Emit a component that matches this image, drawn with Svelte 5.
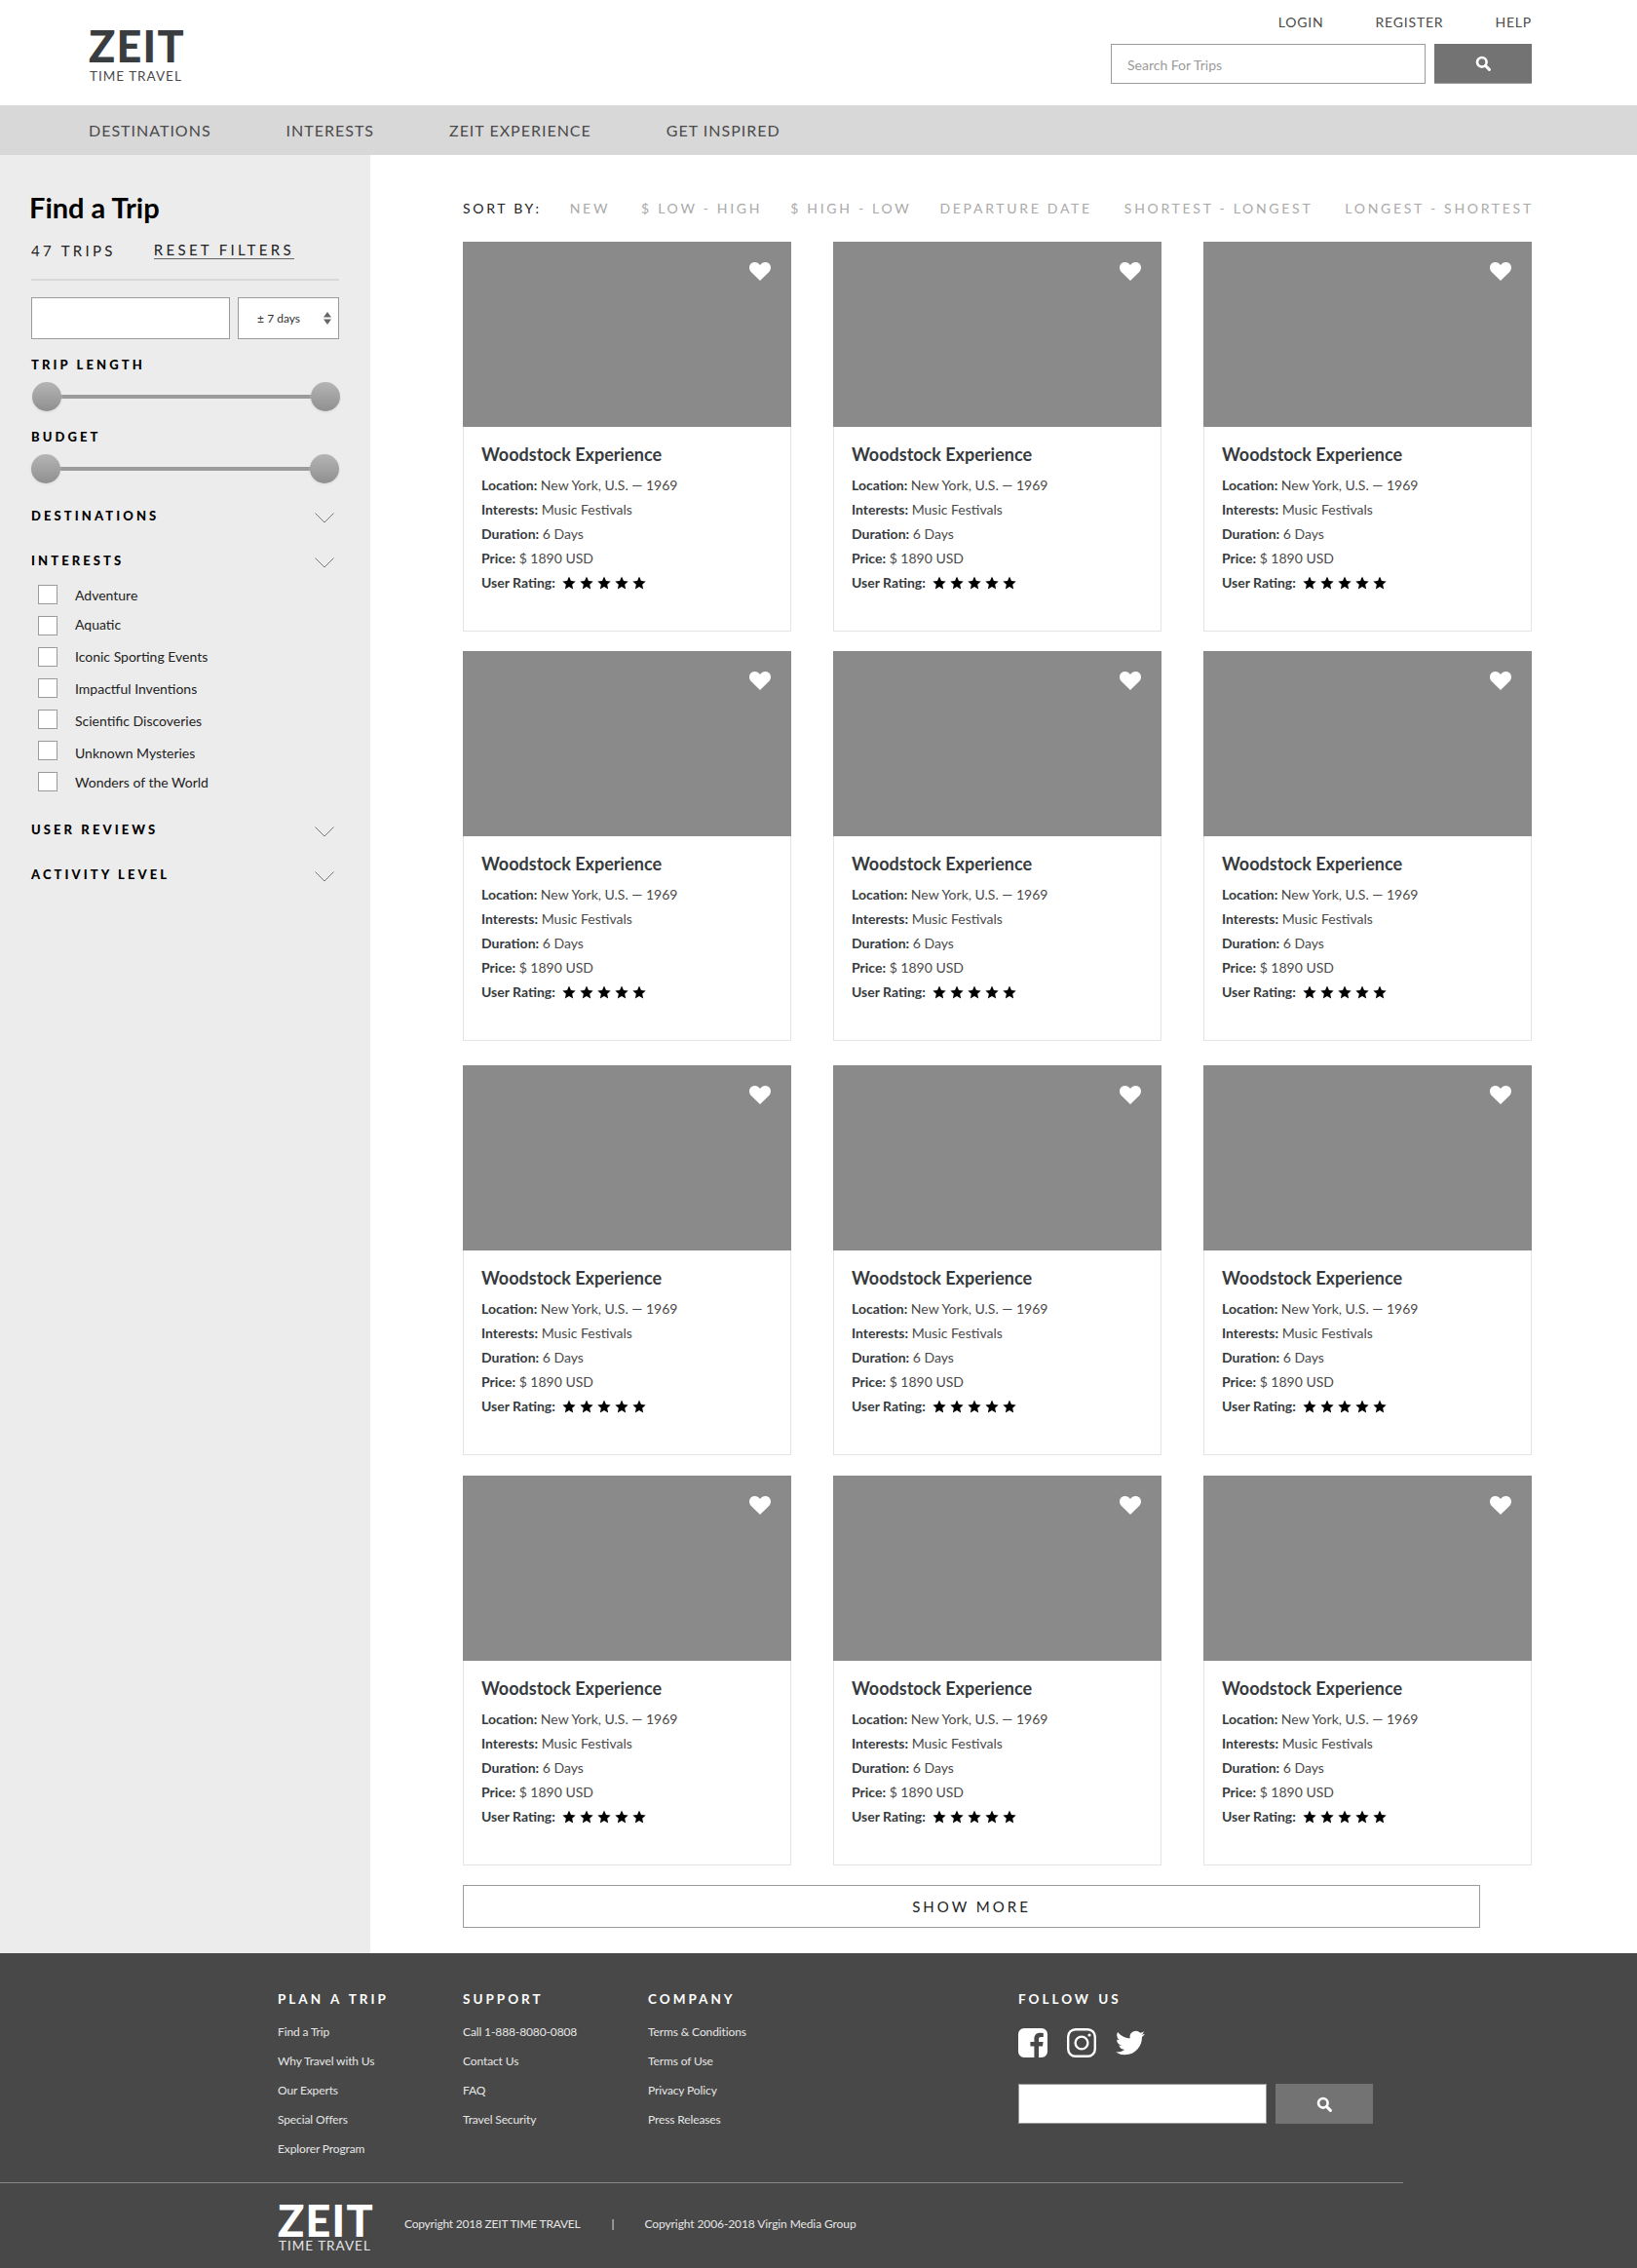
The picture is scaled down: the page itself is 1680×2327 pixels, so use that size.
<script>
  const cardRows = [
    { top: 0 },
    { top: 20 },
    { top: 25 },
    { top: 21 }
  ];
  const cols = [0, 1, 2];
  const navItems = ['DESTINATIONS', 'INTERESTS', 'ZEIT EXPERIENCE', 'GET INSPIRED'];
  const sorts = ['NEW', '$ LOW - HIGH', '$ HIGH - LOW', 'DEPARTURE DATE', 'SHORTEST - LONGEST', 'LONGEST - SHORTEST'];
  const interests = ['Adventure', 'Aquatic', 'Iconic Sporting Events', 'Impactful Inventions', 'Scientific Discoveries', 'Unknown Mysteries', 'Wonders of the World'];
  const footerCols = [
    { h: 'PLAN A TRIP', items: ['Find a Trip', 'Why Travel with Us', 'Our Experts', 'Special Offers', 'Explorer Program'] },
    { h: 'SUPPORT', items: ['Call 1-888-8080-0808', 'Contact Us', 'FAQ', 'Travel Security'] },
    { h: 'COMPANY', items: ['Terms & Conditions', 'Terms of Use', 'Privacy Policy', 'Press Releases'] }
  ];
  const stars = [0, 1, 2, 3, 4];
</script>

{#snippet searchIcon()}
  <svg class="search-ico" viewBox="0 0 16 16" aria-hidden="true"><circle cx="6.8" cy="6.8" r="4.8" fill="none" stroke="#fff" stroke-width="2.6"/><path d="M10.4 10.4 L14.4 14.4" stroke="#fff" stroke-width="3" stroke-linecap="round"/></svg>
{/snippet}

{#snippet chevron()}
  <svg class="chev" viewBox="0 0 20 11" aria-hidden="true"><path d="M0.5 0.5 L10 10 L19.5 0.5" fill="none" stroke="#777" stroke-width="1"/></svg>
{/snippet}

{#snippet slider()}
  <div class="slider"><span class="track"></span><span class="knob"></span><span class="knob"></span></div>
{/snippet}

<div class="page">
  <header class="top">
    <div class="logo">
      <div class="zeit">ZEIT</div>
      <div class="tt">TIME TRAVEL</div>
    </div>
    <div class="top-right">
      <nav class="util"><a href="#a">LOGIN</a><a href="#a">REGISTER</a><a href="#a">HELP</a></nav>
      <div class="search">
        <div class="search-input">Search For Trips</div>
        <button class="search-btn">{@render searchIcon()}</button>
      </div>
    </div>
  </header>

  <nav class="mainnav">
    {#each navItems as n}<a href="#a">{n}</a>{/each}
  </nav>

  <div class="body">
    <aside class="side">
      <h1>Find a Trip</h1>
      <div class="counts"><span>47 TRIPS</span><a href="#a">RESET FILTERS</a></div>
      <div class="rule"></div>
      <div class="dates">
        <div class="date-in"></div>
        <div class="sel">
          <span>± 7 days</span>
          <svg viewBox="0 0 8 13" aria-hidden="true"><path d="M4 0 L8 5.5 H0Z M0 7.5 H8 L4 13Z" fill="#666"/></svg>
        </div>
      </div>
      <h3 class="f-h len">TRIP LENGTH</h3>
      {@render slider()}
      <h3 class="f-h bud">BUDGET</h3>
      <div class="shift">{@render slider()}</div>
      <div class="acc first"><h3 class="f-h">DESTINATIONS</h3>{@render chevron()}</div>
      <div class="acc"><h3 class="f-h">INTERESTS</h3>{@render chevron()}</div>
      <ul class="checks">
        {#each interests as i}
          <li><span class="box"></span><span class="lbl">{i}</span></li>
        {/each}
      </ul>
      <div class="acc rev"><h3 class="f-h">USER REVIEWS</h3>{@render chevron()}</div>
      <div class="acc"><h3 class="f-h">ACTIVITY LEVEL</h3>{@render chevron()}</div>
    </aside>

    <main class="main">
      <div class="sort">
        <span class="sort-l">SORT BY:</span>
        {#each sorts as s}<a href="#a">{s}</a>{/each}
      </div>
      {#each cardRows as r}
        <div class="row" style="margin-top: {r.top}px">
          {#each cols as c}
            <article class="card">
              <div class="img">
                <svg class="heart" viewBox="0 0 22 19" aria-hidden="true"><path d="M11 19 L2 10.2 C-0.7 7.4 -0.6 3.2 2 1.2 C4.8 -0.8 8.8 -0.2 11 3 C13.2 -0.2 17.2 -0.8 20 1.2 C22.6 3.2 22.7 7.4 20 10.2 Z" fill="#fff"/></svg>
              </div>
              <div class="info">
                <h2>Woodstock Experience</h2>
                <p><b>Location:</b> New York, U.S. — 1969</p>
                <p><b>Interests:</b> Music Festivals</p>
                <p><b>Duration:</b> 6 Days</p>
                <p><b>Price:</b> $ 1890 USD</p>
                <p class="rate"><b>User Rating:</b>
                  <span class="stars">
                    {#each stars as s}
                      <svg viewBox="0 0 24 24" aria-hidden="true"><path d="M12 1 L15.4 8.6 L23.4 9.4 L17.4 14.9 L19.1 23 L12 18.8 L4.9 23 L6.6 14.9 L0.6 9.4 L8.6 8.6 Z" fill="#000"/></svg>
                    {/each}
                  </span>
                </p>
              </div>
            </article>
          {/each}
        </div>
      {/each}
      <button class="more">SHOW MORE</button>
    </main>
  </div>

  <footer class="foot">
    <div class="foot-top">
      {#each footerCols as f}
        <div class="fcol">
          <h4>{f.h}</h4>
          {#each f.items as it}<a href="#a">{it}</a>{/each}
        </div>
      {/each}
      <div class="follow">
        <h4>FOLLOW US</h4>
        <div class="social">
          <svg viewBox="0 0 30 30" aria-hidden="true"><path fill="#fff" fill-rule="evenodd" d="M6 0 H24 A6 6 0 0 1 30 6 V24 A6 6 0 0 1 24 30 H21 V18.5 H25 L25.6 14 H21 V11.2 C21 9.8 21.5 8.9 23.3 8.9 H25.8 V4.9 C25.2 4.8 23.9 4.7 22.2 4.7 C18.8 4.7 16.4 6.8 16.4 10.7 V14 H12.4 V18.5 H16.4 V30 H6 A6 6 0 0 1 0 24 V6 A6 6 0 0 1 6 0 Z"/></svg>
          <svg viewBox="0 0 30 30" aria-hidden="true"><rect x="1.2" y="1.2" width="27.6" height="27.6" rx="7.5" fill="none" stroke="#fff" stroke-width="2.4"/><circle cx="15" cy="15" r="6.4" fill="none" stroke="#fff" stroke-width="2.4"/><circle cx="23" cy="7" r="1.6" fill="#fff"/></svg>
          <svg viewBox="0 0 24 24" aria-hidden="true"><path fill="#fff" d="M23.95 4.57a10 10 0 0 1-2.82.77 4.96 4.96 0 0 0 2.16-2.72c-.95.55-2 .95-3.12 1.18a4.92 4.92 0 0 0-8.38 4.48C7.69 8.1 4.07 6.13 1.64 3.16a4.82 4.82 0 0 0-.67 2.48c0 1.71.87 3.21 2.19 4.1a4.9 4.9 0 0 1-2.23-.62v.06a4.92 4.92 0 0 0 3.95 4.83c-.72.2-1.48.22-2.22.08a4.93 4.93 0 0 0 4.6 3.42A9.87 9.87 0 0 1 0 19.54a13.94 13.94 0 0 0 7.55 2.21c9.05 0 14-7.5 14-13.99 0-.21 0-.42-.02-.63a9.94 9.94 0 0 0 2.46-2.55z"/></svg>
        </div>
        <div class="f-search">
          <div class="f-in"></div>
          <button class="f-btn">{@render searchIcon()}</button>
        </div>
      </div>
    </div>
    <div class="foot-rule"></div>
    <div class="foot-bot">
      <div class="logo f-logo">
        <div class="zeit">ZEIT</div>
        <div class="tt">TIME TRAVEL</div>
      </div>
      <span class="c1">Copyright 2018 ZEIT TIME TRAVEL</span>
      <span class="bar">|</span>
      <span class="c2">Copyright 2006-2018 Virgin Media Group</span>
    </div>
  </footer>
</div>

<style>
  :global(body) { margin: 0; background: #fff; }
  .page { width: 1680px; height: 2327px; overflow: hidden; font-family: Lato, "Open Sans", sans-serif; color: #4a4a4a; }
  a { color: inherit; text-decoration: none; }
  h1, h2, h3, h4, p, ul { margin: 0; padding: 0; }
  button { border: 0; padding: 0; cursor: pointer; font-family: inherit; }

  .top { height: 108px; padding: 0 108px 0 91px; display: flex; justify-content: space-between; }
  .logo { padding-top: 25px; }
  .zeit { font-size: 45px; line-height: 44px; font-weight: 900; color: #3a3d40; letter-spacing: 1.2px; }
  .tt { font-size: 13.5px; line-height: 18px; color: #4a4a4a; letter-spacing: 1px; margin-left: 1px; }
  .top-right { width: 432px; }
  .util { display: flex; justify-content: flex-end; gap: 53px; padding-top: 14px; height: 45px; box-sizing: border-box; font-size: 14px; line-height: 17px; letter-spacing: 0.8px; color: #4a4a4a; }
  .search { display: flex; gap: 9px; }
  .search-input { width: 323px; height: 41px; box-sizing: border-box; border: 1px solid #9b9b9b; font-size: 14px; line-height: 41px; padding-left: 16px; color: #9b9b9b; }
  .search-btn { width: 100px; height: 41px; background: #737373; border-bottom: 1px solid #9b9b9b; box-sizing: border-box; display: flex; align-items: center; justify-content: center; }
  .search-ico { width: 16px; height: 16px; display: block; }

  .mainnav { height: 51px; background: #d8d8d8; display: flex; align-items: center; padding-left: 91px; gap: 77px; font-size: 16px; letter-spacing: 1px; color: #4a4a4a; }

  .body { display: flex; height: 1845px; }
  .side { width: 380px; flex: none; background: #ececec; box-sizing: border-box; padding: 38px 32px 0; color: #000; }
  h1 { font-size: 29px; line-height: 32px; font-weight: 700; margin-left: -2px; color: #000; }
  .counts { display: flex; gap: 39px; margin-top: 19px; font-size: 15px; line-height: 18px; letter-spacing: 3.3px; color: #222; }
  .counts a { border-bottom: 1px solid #666; line-height: 17px; height: 17px; }
  .rule { height: 2px; background: #d8d8d8; margin-top: 20px; width: 316px; }
  .dates { display: flex; gap: 8px; margin-top: 17px; }
  .date-in { width: 204px; height: 43px; box-sizing: border-box; border: 1px solid #9b9b9b; background: #fff; }
  .sel { width: 104px; height: 43px; box-sizing: border-box; border: 1px solid #9b9b9b; background: #fff; font-size: 12px; display: flex; align-items: center; justify-content: flex-end; gap: 24px; padding-right: 7px; color: #333; }
  .sel svg { width: 8px; height: 13px; }
  .f-h { font-size: 13px; line-height: 16px; letter-spacing: 3.1px; font-weight: 900; color: #000; }
  .len { margin-top: 18px; }
  .bud { margin-top: 18px; }
  .slider { position: relative; width: 316px; height: 30px; margin-top: 10px; display: flex; justify-content: space-between; align-items: center; margin-left: 1px; }
  .shift { margin-left: -1px; }
  .track { position: absolute; left: 15px; right: 15px; top: 13px; height: 4px; background: #9b9b9b; }
  .knob { position: relative; width: 30px; height: 30px; border-radius: 50%; background: linear-gradient(#b5b5b5, #8f8f8f); box-shadow: 0 1px 2px rgba(255,255,255,.7), 0 1px 2px rgba(0,0,0,.2); }
  .acc { display: flex; justify-content: space-between; align-items: center; width: 311px; height: 16px; margin-top: 30px; }
  .acc.first { margin-top: 25px; }
  .acc.rev { margin-top: 25px; }
  .chev { width: 20px; height: 11px; display: block; position: relative; top: 2px; }
  .checks { list-style: none; margin-top: 11px; margin-left: 7px; font-size: 14px; color: #222; }
  .checks li { display: flex; align-items: center; gap: 18px; height: 32px; }
  .checks li:nth-child(2) .lbl { margin-top: -4px; }
  .checks li:nth-child(3) .lbl { margin-top: -2px; }
  .checks li:nth-child(5) .lbl { margin-top: 2px; }
  .checks li:nth-child(6) .lbl { margin-top: 4px; }
  .box { width: 20px; height: 20px; box-sizing: border-box; border: 1px solid #9b9b9b; background: #fff; flex: none; }

  .main { flex: 1; padding: 0 0 0 95px; box-sizing: border-box; }
  .sort { height: 89px; box-sizing: border-box; padding-top: 46px; display: flex; gap: 29px; font-size: 14px; line-height: 17px; letter-spacing: 2.7px; color: #aaa; white-space: nowrap; }
  .sort a:nth-of-type(2) { margin-left: 3px; }
  .sort a:nth-of-type(5) { margin-left: 4px; }
  .sort a:nth-of-type(6) { margin-left: 4px; }
  .sort-l { color: #222; }
  .row { display: flex; gap: 43px; width: 1097px; }
  .card { width: 337px; height: 400px; box-sizing: border-box; border: 1px solid #e4e4e4; border-top: 0; flex: none; }
  .img { height: 190px; margin: 0 -1px; background: #8a8a8a; position: relative; }
  .heart { position: absolute; right: 21px; top: 21px; width: 22px; height: 19px; }
  .info { padding: 18px 18px 0; }
  h2 { font-size: 18px; line-height: 20px; font-weight: 700; color: #363a3d; margin-bottom: 9px; }
  .info p { font-size: 14px; line-height: 25px; color: #4a4a4a; white-space: nowrap; }
  .info b { color: #363a3d; font-weight: 700; }
  .rate { display: flex; align-items: center; gap: 7px; }
  .stars { display: inline-flex; gap: 4px; }
  .stars svg { width: 14px; height: 14px; display: block; }
  .more { display: block; margin-top: 20px; width: 1044px; height: 44px; background: #fff; border: 1px solid #9b9b9b; box-sizing: border-box; font-size: 15px; letter-spacing: 3px; color: #222; }

  .foot { height: 323px; background: #484848; color: #e6e6e6; }
  .foot-top { height: 235px; box-sizing: border-box; padding: 39px 0 0 285px; display: flex; }
  .fcol { width: 190px; }
  h4 { font-size: 13.5px; line-height: 16px; font-weight: 700; letter-spacing: 3px; word-spacing: 1px; color: #fff; }
  .fcol a { display: block; font-size: 12px; letter-spacing: -0.12px; line-height: 15px; margin-top: 15px; }
  .fcol h4 { margin-bottom: 18px; }
  .follow { margin-left: 190px; }
  .social { display: flex; gap: 20px; margin-top: 22px; }
  .social svg { width: 30px; height: 30px; display: block; }
  .f-search { display: flex; gap: 9px; margin-top: 27px; }
  .f-in { width: 255px; height: 41px; background: #fff; box-sizing: border-box; border: 1px solid #9b9b9b; }
  .f-btn { width: 100px; height: 41px; background: #737373; display: flex; align-items: center; justify-content: center; }
  .foot-rule { width: 1440px; height: 1px; background: #8a8a8a; }
  .foot-bot { padding-left: 285px; display: flex; align-items: flex-start; font-size: 12px; height: 87px; line-height: 15px; color: #e6e6e6; }
  .foot-bot > span { margin-top: 34px; }
  .f-logo { padding-top: 21px; width: 130px; }
  .f-logo .zeit { color: #fff; line-height: 34px; }
  .f-logo .tt { color: #e6e6e6; }
  .c1 { letter-spacing: -0.22px; }
  .c2 { letter-spacing: -0.1px; }
  .foot-bot > .bar { margin: 34px 31px 0 32px; }
</style>
